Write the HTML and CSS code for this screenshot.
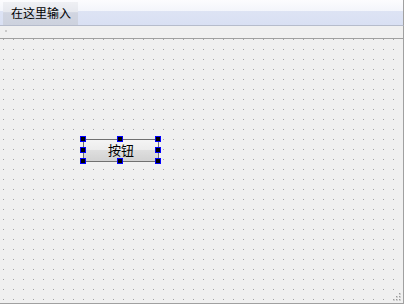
FILE: index.html
```html
<!DOCTYPE html>
<html>
	<head>
		<meta name="viewport" content="width=device-width,initial-scale=1.0">
		<title>Form designer</title>
		<link rel="stylesheet" href="styles.css">
	</head>
	<body>
		<div class="window">
			<div class="menubar">
				<span class="menu-item">在这里输入</span>
			</div>
			<div class="toolstrip">
				<span class="strip-grip"></span>
			</div>
			<div class="canvas">
				<!-- selected control on the design surface -->
				<div class="selection">
					<button class="form-button">按钮</button>
					<span class="handle h-tl"></span>
					<span class="handle h-tm"></span>
					<span class="handle h-tr"></span>
					<span class="handle h-ml"></span>
					<span class="handle h-mr"></span>
					<span class="handle h-bl"></span>
					<span class="handle h-bm"></span>
					<span class="handle h-br"></span>
				</div>
				<svg class="size-grip" width="10" height="10" viewBox="0 0 10 10">
					<rect x="7" y="1" width="2" height="2" fill="#d0d0d0"/>
					<rect x="4" y="4" width="2" height="2" fill="#d0d0d0"/>
					<rect x="7" y="4" width="2" height="2" fill="#d0d0d0"/>
					<rect x="1" y="7" width="2" height="2" fill="#d0d0d0"/>
					<rect x="4" y="7" width="2" height="2" fill="#d0d0d0"/>
					<rect x="7" y="7" width="2" height="2" fill="#d0d0d0"/>
					<rect x="7" y="1" width="1" height="1" fill="#9a9a9a"/>
					<rect x="4" y="4" width="1" height="1" fill="#9a9a9a"/>
					<rect x="7" y="4" width="1" height="1" fill="#9a9a9a"/>
					<rect x="1" y="7" width="1" height="1" fill="#9a9a9a"/>
					<rect x="4" y="7" width="1" height="1" fill="#9a9a9a"/>
					<rect x="7" y="7" width="1" height="1" fill="#9a9a9a"/>
				</svg>
			</div>
		</div>
	</body>
</html>
```

FILE: styles.css
```css
body {
	margin: 0;
	background: #fff;
	font-family: "Noto Sans CJK SC", "Noto Sans", sans-serif;
}

.window {
	width: 404px;
	display: flex;
	flex-direction: column;
}

.menubar {
	height: 25px;
	display: flex;
	align-items: flex-end;
	padding-left: 3px;
	border-bottom: 1px solid #b6bccc;
	border-right: 1px solid #a0a0a0;
	background: linear-gradient(#fcfcfe 0, #f3f5fb 44%, #dde3f4 46%, #d9e0f3 100%);
}

.menu-item {
	height: 23px;
	line-height: 22px;
	padding: 0 7px 0 8px;
	font-size: 12px;
	color: #000;
	background: linear-gradient(#eff0f4 0, #e6e8ee 44%, #d1d5e1 46%, #cdd2de 100%);
}

.toolstrip {
	height: 12px;
	background: #f0f0f0;
	border-right: 1px solid #a0a0a0;
	padding: 4px 0 0 5px;
	box-sizing: border-box;
}

.strip-grip {
	display: block;
	width: 2px;
	height: 2px;
	background: #cacaca;
}

/* design surface with the 10px dot grid */
.canvas {
	position: relative;
	height: 264px;
	border-top: 1px solid #a0a0a0;
	border-right: 1px solid #a0a0a0;
	border-bottom: 1px solid #a0a0a0;
	background-color: #f0f0f0;
	background-image: conic-gradient(at 1px 1px, transparent 270deg, #a4a4a4 0);
	background-size: 10px 10px;
	background-position: 3px 0;
}

.selection {
	position: absolute;
	left: 83px;
	top: 100px;
	width: 76px;
	height: 23px;
}

.form-button {
	display: block;
	width: 100%;
	height: 100%;
	box-sizing: border-box;
	border: 1px solid #707070;
	border-radius: 2px;
	padding: 0 0 2px;
	font-family: "Noto Sans CJK SC", sans-serif;
	font-size: 13px;
	line-height: 1;
	color: #000;
	background: linear-gradient(#f4f4f4 0, #ececec 48%, #dedede 50%, #d2d2d2 100%);
}

.handle {
	position: absolute;
	width: 6px;
	height: 6px;
	box-sizing: border-box;
	border: 1px solid #0000ff;
	background: #000;
}

.h-tl { left: -3px; top: -3px; }
.h-tm { left: 34px; top: -3px; }
.h-tr { left: 72px; top: -3px; }
.h-ml { left: -3px; top: 8px; }
.h-mr { left: 72px; top: 8px; }
.h-bl { left: -3px; top: 19px; }
.h-bm { left: 34px; top: 19px; }
.h-br { left: 72px; top: 19px; }

.size-grip {
	position: absolute;
	right: 1px;
	bottom: 1px;
}
```
